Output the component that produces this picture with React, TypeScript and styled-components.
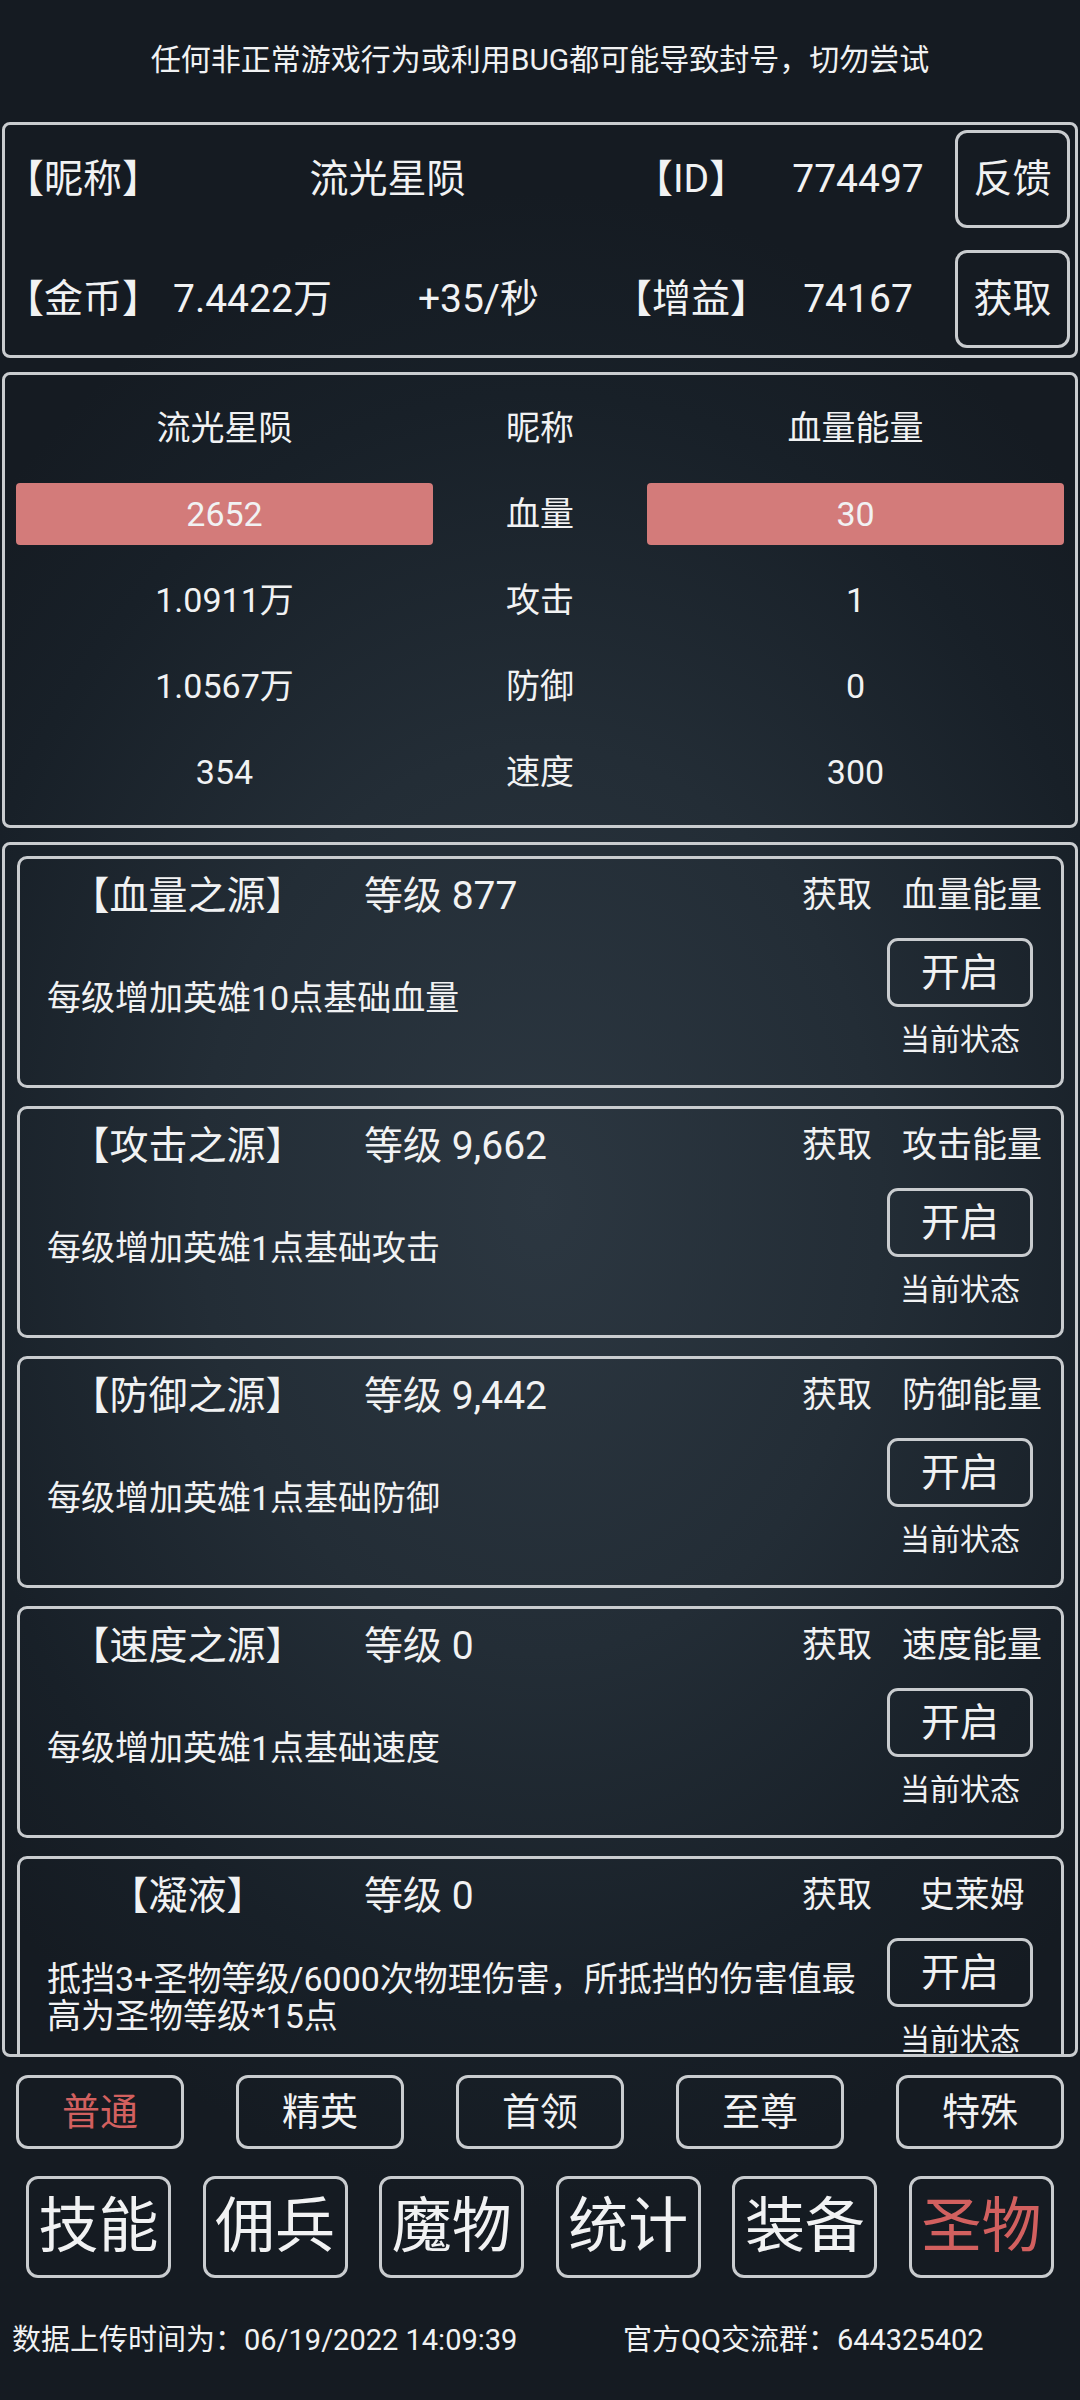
import React from "react";
import styled, { createGlobalStyle } from "styled-components";

const FONT = `"Roboto", "Noto Sans CJK SC", sans-serif`;
const LINE = "#c9cccf";
const BW = "3px";
const RED = "#d2605f";
const TEXT = "#f1f2f3";

const GlobalStyle = createGlobalStyle`
  html, body { margin: 0; padding: 0; }
  body { background: #161d24; font-family: ${FONT}; color: ${TEXT}; }
  * { box-sizing: border-box; }
`;

const Page = styled.div`
  width: 1080px;
  height: 2400px;
  overflow: hidden;
  display: flex;
  flex-direction: column;
  font-family: ${FONT};
  color: ${TEXT};
  background:
    radial-gradient(ellipse 70% 42% at 50% 50%, #2c3741 0%, #232d36 45%, #182028 80%, #151b22 100%);
`;

const Notice = styled.div`
  height: 122px;
  padding-bottom: 2px;
  display: flex;
  align-items: center;
  justify-content: center;
  font-size: 30px;
  line-height: 36px;
`;

const Frame = styled.section<{ $h: number }>`
  height: ${(p) => p.$h}px;
  margin: 0 2px;
  border: ${BW} solid ${LINE};
  border-radius: 8px;
`;

const InfoFrame = styled(Frame)`
  padding: 5px 5px 7px 0;
  display: flex;
  flex-direction: column;
  gap: 22px;
`;

const InfoRow = styled.div`
  height: 98px;
  display: grid;
  grid-template-columns: 159px 447px 160px 174px 125px;
  align-items: center;
  font-size: 39px;
  line-height: 46px;
  white-space: nowrap;
`;

const Cell = styled.div<{ $align?: "left" | "center" }>`
  text-align: ${(p) => p.$align ?? "center"};
`;

const ValueGroup = styled.div`
  display: flex;
  align-items: center;
  gap: 86px;
  padding-left: 9px;
`;

const SideButton = styled.button`
  justify-self: end;
  width: 115px;
  height: 98px;
  padding: 0;
  border: ${BW} solid ${LINE};
  border-radius: 12px;
  background: transparent;
  color: ${TEXT};
  font-family: ${FONT};
  font-size: 39px;
  line-height: 46px;
`;

const StatsFrame = styled(Frame)`
  margin-top: 14px;
  padding: 10px 11px;
  display: grid;
  grid-template-columns: 417px 214px 417px;
  grid-auto-rows: 86px;
  align-items: center;
  font-size: 34px;
  line-height: 40px;
  text-align: center;
`;

const StatCell = styled.div<{ $bar?: boolean }>`
  height: ${(p) => (p.$bar ? "62px" : "auto")};
  display: flex;
  align-items: center;
  justify-content: center;
  background: ${(p) => (p.$bar ? "#d37b7a" : "transparent")};
  border-radius: ${(p) => (p.$bar ? "4px" : "0")};
`;

const SourceFrame = styled(Frame)`
  margin-top: 14px;
  padding: 11px 11px 0 12px;
  overflow: hidden;
  display: flex;
  flex-direction: column;
  gap: 18px;
`;

const Card = styled.div`
  flex: none;
  height: 232px;
  border: ${BW} solid ${LINE};
  border-radius: 10px;
  display: flex;
  flex-direction: column;
`;

const CardHead = styled.div`
  height: 73px;
  display: grid;
  grid-template-columns: 335px 1fr auto 140px;
  align-items: center;
  padding-right: 19px;
  white-space: nowrap;
`;

const CardTitle = styled.div`
  text-align: center;
  font-size: 39px;
  line-height: 46px;
`;

const Level = styled.div`
  padding-left: 9px;
  font-size: 39px;
  line-height: 46px;
`;

const GetLabel = styled.div`
  margin-right: 30px;
  font-size: 35px;
  line-height: 42px;
`;

const Energy = styled.div`
  text-align: center;
  font-size: 35px;
  line-height: 42px;
`;

const CardBody = styled.div`
  flex: 1;
  display: flex;
  align-items: flex-start;
  padding: 6px 28px 0 27px;
`;

const Desc = styled.div`
  flex: 1;
  align-self: stretch;
  display: flex;
  align-items: center;
  max-height: 120px;
  margin-right: 20px;
  font-size: 34px;
  line-height: 37px;
`;

const Toggle = styled.div`
  width: 146px;
  display: flex;
  flex-direction: column;
  align-items: center;
  gap: 15px;
`;

const ToggleButton = styled.button`
  width: 146px;
  height: 69px;
  padding: 0;
  border: ${BW} solid ${LINE};
  border-radius: 11px;
  background: transparent;
  color: ${TEXT};
  font-family: ${FONT};
  font-size: 39px;
  line-height: 46px;
`;

const Status = styled.div`
  font-size: 30px;
  line-height: 36px;
  white-space: nowrap;
`;

const TabRow = styled.div`
  margin-top: 18px;
  padding: 0 16px;
  display: flex;
  justify-content: space-between;
`;

const Tab = styled.button<{ $active?: boolean }>`
  width: 168px;
  height: 74px;
  padding: 0;
  border: ${BW} solid ${LINE};
  border-radius: 12px;
  background: transparent;
  color: ${(p) => (p.$active ? RED : TEXT)};
  font-family: ${FONT};
  font-size: 38px;
  line-height: 44px;
`;

const NavRow = styled.div`
  margin-top: 27px;
  padding: 0 26px;
  display: flex;
  justify-content: space-between;
`;

const NavButton = styled.button<{ $active?: boolean }>`
  width: 145px;
  height: 102px;
  padding: 0;
  border: ${BW} solid ${LINE};
  border-radius: 12px;
  background: transparent;
  color: ${(p) => (p.$active ? RED : TEXT)};
  font-family: ${FONT};
  font-size: 60px;
  line-height: 70px;
`;

const Footer = styled.div`
  margin-top: 42px;
  padding-left: 12px;
  display: grid;
  grid-template-columns: 611px 1fr;
  font-size: 29px;
  line-height: 40px;
  white-space: nowrap;
`;

const stats: { cells: [string, string, string]; bar?: boolean }[] = [
  { cells: ["流光星陨", "昵称", "血量能量"] },
  { cells: ["2652", "血量", "30"], bar: true },
  { cells: ["1.0911万", "攻击", "1"] },
  { cells: ["1.0567万", "防御", "0"] },
  { cells: ["354", "速度", "300"] },
];

const sources = [
  { name: "【血量之源】", level: "877", energy: "血量能量", desc: "每级增加英雄10点基础血量" },
  { name: "【攻击之源】", level: "9,662", energy: "攻击能量", desc: "每级增加英雄1点基础攻击" },
  { name: "【防御之源】", level: "9,442", energy: "防御能量", desc: "每级增加英雄1点基础防御" },
  { name: "【速度之源】", level: "0", energy: "速度能量", desc: "每级增加英雄1点基础速度" },
  {
    name: "【凝液】",
    level: "0",
    energy: "史莱姆",
    desc: "抵挡3+圣物等级/6000次物理伤害，所抵挡的伤害值最高为圣物等级*15点",
  },
];

const tabs = ["普通", "精英", "首领", "至尊", "特殊"];
const navs = ["技能", "佣兵", "魔物", "统计", "装备", "圣物"];

export default function App() {
  return (
    <Page>
      <GlobalStyle />
      <Notice>任何非正常游戏行为或利用BUG都可能导致封号，切勿尝试</Notice>

      <InfoFrame $h={236}>
        <InfoRow>
          <Cell $align="left">【昵称】</Cell>
          <Cell>流光星陨</Cell>
          <Cell>【ID】</Cell>
          <Cell>774497</Cell>
          <SideButton>反馈</SideButton>
        </InfoRow>
        <InfoRow>
          <Cell $align="left">【金币】</Cell>
          <ValueGroup>
            <span>7.4422万</span>
            <span>+35/秒</span>
          </ValueGroup>
          <Cell>【增益】</Cell>
          <Cell>74167</Cell>
          <SideButton>获取</SideButton>
        </InfoRow>
      </InfoFrame>

      <StatsFrame $h={456}>
        {stats.map((row, i) => (
          <React.Fragment key={i}>
            <StatCell $bar={row.bar}>{row.cells[0]}</StatCell>
            <StatCell>{row.cells[1]}</StatCell>
            <StatCell $bar={row.bar}>{row.cells[2]}</StatCell>
          </React.Fragment>
        ))}
      </StatsFrame>

      <SourceFrame $h={1215}>
        {sources.map((s) => (
          <Card key={s.name}>
            <CardHead>
              <CardTitle>{s.name}</CardTitle>
              <Level>等级 {s.level}</Level>
              <GetLabel>获取</GetLabel>
              <Energy>{s.energy}</Energy>
            </CardHead>
            <CardBody>
              <Desc>{s.desc}</Desc>
              <Toggle>
                <ToggleButton>开启</ToggleButton>
                <Status>当前状态</Status>
              </Toggle>
            </CardBody>
          </Card>
        ))}
      </SourceFrame>

      <TabRow>
        {tabs.map((t, i) => (
          <Tab key={t} $active={i === 0}>
            {t}
          </Tab>
        ))}
      </TabRow>

      <NavRow>
        {navs.map((n, i) => (
          <NavButton key={n} $active={i === navs.length - 1}>
            {n}
          </NavButton>
        ))}
      </NavRow>

      <Footer>
        <span>数据上传时间为：06/19/2022 14:09:39</span>
        <span>官方QQ交流群：644325402</span>
      </Footer>
    </Page>
  );
}
